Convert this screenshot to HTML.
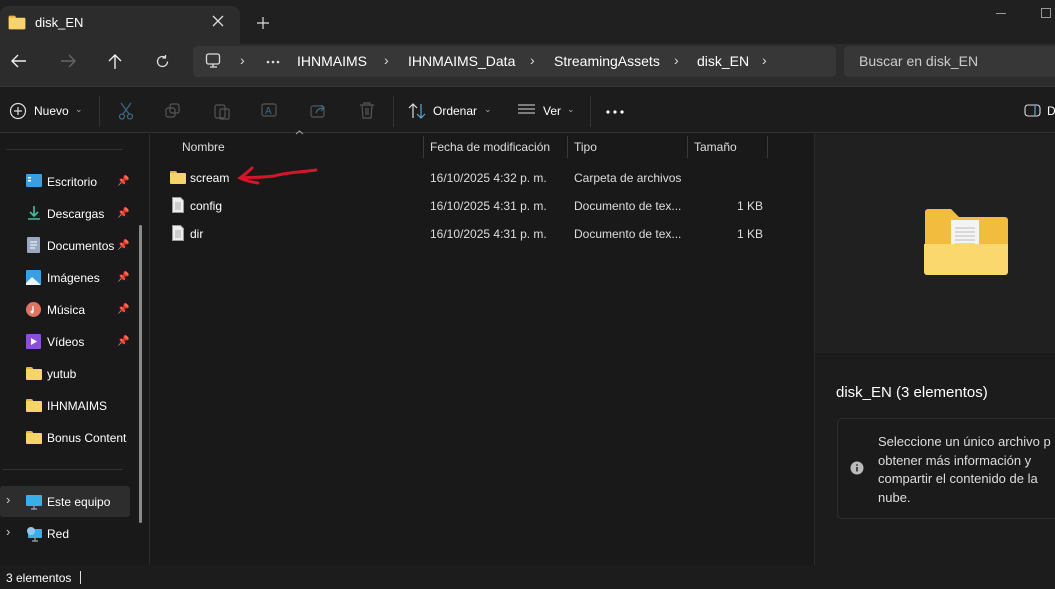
<!DOCTYPE html>
<html><head><meta charset="utf-8"><style>
*{margin:0;padding:0;box-sizing:border-box}
body{width:1055px;height:589px;overflow:hidden;background:#191919;font-family:"Segoe UI","Liberation Sans",sans-serif;color:#fff;position:relative;font-size:12px}
.a{position:absolute;white-space:nowrap}
.t{font-size:12px;color:#fff;margin-top:1px}
.g{color:#ddd;margin-top:1px}
svg{position:absolute}
.fold{position:absolute;width:16px;height:13px}
.fold:before{content:"";position:absolute;left:0;top:0;width:7px;height:4px;background:#e8b43a;border-radius:1px 2px 0 0}
.fold:after{content:"";position:absolute;left:0;top:2px;width:16px;height:11px;background:#f7d36c;border-radius:1px}
.pin{color:#999;font-size:10px}
</style></head><body>
<div class="a" style="left:0;top:0;width:1055px;height:44px;background:#202020"></div>
<div class="a" style="left:0;top:6px;width:240px;height:38px;background:#2c2c2c;border-radius:8px 8px 0 0"></div>
<div class="fold" style="left:9px;top:16px;transform:scale(1.05)"></div>
<div class="a" style="left:35px;top:15px;font-size:13px">disk_EN</div>
<svg style="left:212px;top:15px" width="12" height="12"><path d="M1 1l10 10M11 1L1 11" stroke="#ddd" stroke-width="1.3"/></svg>
<svg style="left:257px;top:17px" width="12" height="12"><path d="M6 0v12M0 6h12" stroke="#ddd" stroke-width="1.2"/></svg>
<div class="a" style="left:996px;top:13px;width:10px;height:1px;background:#999"></div>
<div class="a" style="left:1041px;top:8px;width:10px;height:10px;border:1px solid #999"></div>
<div class="a" style="left:0;top:44px;width:1055px;height:43px;background:#2c2c2c;border-bottom:1px solid #3a3a3a"></div>
<svg style="left:11px;top:54px" width="16" height="14"><path d="M15 7H2M7 1L1 7l6 6" fill="none" stroke="#eee" stroke-width="1.4"/></svg>
<svg style="left:60px;top:54px" width="16" height="14"><path d="M1 7h13M9 1l6 6-6 6" fill="none" stroke="#666" stroke-width="1.4"/></svg>
<svg style="left:108px;top:54px" width="14" height="16"><path d="M7 15V2M1 7l6-6 6 6" fill="none" stroke="#eee" stroke-width="1.4"/></svg>
<svg style="left:155px;top:54px" width="15" height="15" viewBox="0 0 15 15"><path d="M12.5 7.5A5 5 0 1 1 10.5 3.5M10.5 1v3h-3" fill="none" stroke="#ddd" stroke-width="1.3"/></svg>
<div class="a" style="left:193px;top:46px;width:643px;height:31px;background:#373737;border-radius:5px"></div>
<svg style="left:205px;top:53px" width="17" height="16" viewBox="0 0 17 16"><rect x="1.5" y="1" width="13" height="10" rx="2" fill="none" stroke="#ddd" stroke-width="1.3"/><path d="M5 14h7M8 11v3" stroke="#ddd" stroke-width="1.3"/></svg>
<div class="a" style="left:240px;top:52px;font-size:14px;color:#ddd">›</div>
<svg style="left:266px;top:60px" width="14" height="4"><circle cx="2" cy="2" r="1.3" fill="#ddd"/><circle cx="7" cy="2" r="1.3" fill="#ddd"/><circle cx="12" cy="2" r="1.3" fill="#ddd"/></svg>
<div class="a" style="left:297px;top:53px;font-size:14px">IHNMAIMS</div>
<div class="a" style="left:384px;top:52px;font-size:14px;color:#ddd">›</div>
<div class="a" style="left:408px;top:53px;font-size:14px">IHNMAIMS_Data</div>
<div class="a" style="left:530px;top:52px;font-size:14px;color:#ddd">›</div>
<div class="a" style="left:554px;top:53px;font-size:14px">StreamingAssets</div>
<div class="a" style="left:674px;top:52px;font-size:14px;color:#ddd">›</div>
<div class="a" style="left:697px;top:53px;font-size:14px">disk_EN</div>
<div class="a" style="left:762px;top:52px;font-size:14px;color:#ddd">›</div>
<div class="a" style="left:844px;top:46px;width:215px;height:31px;background:#373737;border-radius:5px"></div>
<div class="a" style="left:859px;top:53px;font-size:14px;color:#ccc">Buscar en disk_EN</div>
<div class="a" style="left:0;top:88px;width:1055px;height:45px;background:#1c1c1c;border-bottom:1px solid #333"></div>
<svg style="left:9px;top:102px" width="18" height="18" viewBox="0 0 18 18"><circle cx="9" cy="9" r="7.5" fill="none" stroke="#ddd" stroke-width="1.2"/><path d="M9 5v8M5 9h8" stroke="#ddd" stroke-width="1.2"/></svg>
<div class="a" style="left:34px;top:104px;font-size:12px">Nuevo</div>
<div class="a" style="left:75px;top:104px;font-size:9px;color:#aaa">⌄</div>
<div class="a" style="left:99px;top:96px;width:1px;height:31px;background:#333"></div>
<svg style="left:118px;top:102px" width="16" height="18"><path d="M3 1l8 11M13 1L5 12" stroke="#3e6a80" stroke-width="1.2"/><circle cx="4" cy="14.5" r="2.5" fill="none" stroke="#3e6a80" stroke-width="1.2"/><circle cx="12" cy="14.5" r="2.5" fill="none" stroke="#3e6a80" stroke-width="1.2"/></svg>
<svg style="left:165px;top:103px" width="16" height="16"><rect x="1" y="5" width="9" height="9" rx="2" fill="none" stroke="#555" stroke-width="1.2"/><rect x="5" y="1" width="9" height="9" rx="2" fill="none" stroke="#555" stroke-width="1.2"/></svg>
<svg style="left:214px;top:102px" width="16" height="18"><rect x="1" y="3" width="10" height="13" rx="2" fill="none" stroke="#555" stroke-width="1.2"/><rect x="6" y="7" width="9" height="10" rx="1" fill="none" stroke="#555" stroke-width="1.2"/></svg>
<svg style="left:261px;top:102px" width="18" height="17"><rect x="1" y="2" width="14" height="12" rx="2" fill="none" stroke="#555" stroke-width="1.2"/><text x="4" y="12" font-size="10" fill="#3e6a80" font-family="Liberation Sans">A</text></svg>
<svg style="left:310px;top:102px" width="17" height="17"><rect x="1" y="4" width="13" height="11" rx="2" fill="none" stroke="#555" stroke-width="1.2"/><path d="M6 11c1-4 4-5 8-5M11 3l3 3-3 3" fill="none" stroke="#3e6a80" stroke-width="1.2"/></svg>
<svg style="left:359px;top:102px" width="16" height="17"><path d="M1 3h14M5 3V1h6v2M3 3l1 13h8l1-13M7 6v7M9 6v7" fill="none" stroke="#555" stroke-width="1.2"/></svg>
<div class="a" style="left:393px;top:96px;width:1px;height:31px;background:#333"></div>
<svg style="left:408px;top:103px" width="18" height="16"><path d="M5 15V1M1 5l4-4 4 4" fill="none" stroke="#ddd" stroke-width="1.2"/><path d="M13 1v14M9 11l4 4 4-4" fill="none" stroke="#5aa7d6" stroke-width="1.2"/></svg>
<div class="a" style="left:433px;top:104px;font-size:12px">Ordenar</div>
<div class="a" style="left:484px;top:104px;font-size:9px;color:#aaa">⌄</div>
<svg style="left:518px;top:104px" width="18" height="12"><path d="M0 1h17M0 5h17M0 9h17" stroke="#ddd" stroke-width="1.1"/></svg>
<div class="a" style="left:543px;top:104px;font-size:12px">Ver</div>
<div class="a" style="left:567px;top:104px;font-size:9px;color:#aaa">⌄</div>
<div class="a" style="left:590px;top:96px;width:1px;height:31px;background:#333"></div>
<svg style="left:606px;top:110px" width="18" height="4"><circle cx="2" cy="2" r="1.6" fill="#fff"/><circle cx="9" cy="2" r="1.6" fill="#fff"/><circle cx="16" cy="2" r="1.6" fill="#fff"/></svg>
<svg style="left:1024px;top:104px" width="17" height="14"><rect x="1" y="1" width="15" height="11" rx="3" fill="none" stroke="#ddd" stroke-width="1.1"/><path d="M11 1v11" stroke="#5aa7d6" stroke-width="1.2"/></svg>
<div class="a" style="left:1047px;top:104px;font-size:12px">D</div>
<div class="a" style="left:6px;top:149px;width:117px;height:1px;background:#333"></div>
<div class="a" style="left:149px;top:134px;width:1px;height:431px;background:#2b2b2b"></div>
<div class="a" style="left:139px;top:225px;width:3px;height:298px;background:#8a8a8a;border-radius:2px"></div>
<svg style="left:26px;top:174px" width="16" height="14"><rect width="16" height="13" rx="1" fill="#3a9fe0"/><rect x="2" y="3" width="3" height="1.5" fill="#fff"/><rect x="2" y="6" width="3" height="1.5" fill="#fff"/></svg>
<div class="a t" style="left:47px;top:174px">Escritorio</div><div class="a pin" style="left:117px;top:176px">📌</div>
<svg style="left:27px;top:205px" width="14" height="16"><path d="M7 1v10M3 7l4 4 4-4M1 14h12" fill="none" stroke="#3cc39a" stroke-width="1.6"/></svg>
<div class="a t" style="left:47px;top:206px">Descargas</div><div class="a pin" style="left:117px;top:208px">📌</div>
<svg style="left:27px;top:237px" width="13" height="16"><rect width="13" height="16" rx="1" fill="#9aa7c0"/><path d="M3 5h7M3 8h7M3 11h5" stroke="#fff" stroke-width="1"/></svg>
<div class="a t" style="left:47px;top:238px">Documentos</div><div class="a pin" style="left:117px;top:240px">📌</div>
<svg style="left:26px;top:270px" width="15" height="15"><rect width="15" height="15" rx="1" fill="#3a9fe0"/><path d="M0 13l6-6 9 8H0z" fill="#eaf4ff"/></svg>
<div class="a t" style="left:47px;top:270px">Imágenes</div><div class="a pin" style="left:117px;top:272px">📌</div>
<svg style="left:26px;top:302px" width="15" height="15"><circle cx="7.5" cy="7.5" r="7.5" fill="#e0735f"/><path d="M7 4v6" stroke="#fff" stroke-width="1.3"/><circle cx="6" cy="10" r="1.5" fill="#fff"/></svg>
<div class="a t" style="left:47px;top:302px">Música</div><div class="a pin" style="left:117px;top:304px">📌</div>
<svg style="left:26px;top:334px" width="15" height="15"><rect width="15" height="15" rx="1" fill="#8c4fd8"/><path d="M5 4l6 3.5L5 11z" fill="#fff"/></svg>
<div class="a t" style="left:47px;top:334px">Vídeos</div><div class="a pin" style="left:117px;top:336px">📌</div>
<div class="fold" style="left:26px;top:367px"></div><div class="a t" style="left:47px;top:366px">yutub</div>
<div class="fold" style="left:26px;top:399px"></div><div class="a t" style="left:47px;top:398px">IHNMAIMS</div>
<div class="fold" style="left:26px;top:431px"></div><div class="a t" style="left:47px;top:430px">Bonus Content</div>
<div class="a" style="left:3px;top:469px;width:120px;height:1px;background:#333"></div>
<div class="a" style="left:0;top:486px;width:130px;height:31px;background:#2d2d2d;border-radius:3px"></div>
<div class="a" style="left:6px;top:492px;font-size:13px;color:#ccc">›</div>
<svg style="left:26px;top:495px" width="16" height="15"><rect width="16" height="11" rx="1" fill="#3aaee6"/><path d="M8 11v3M5 14h6" stroke="#9ab" stroke-width="1.2"/></svg>
<div class="a t" style="left:47px;top:494px">Este equipo</div>
<div class="a" style="left:6px;top:524px;font-size:13px;color:#ccc">›</div>
<svg style="left:26px;top:526px" width="16" height="16"><rect x="2" y="3" width="14" height="9" rx="1" fill="#3aaee6"/><circle cx="5" cy="5" r="4" fill="#8fc9ee"/><path d="M9 12v3M6 15h6" stroke="#9ab" stroke-width="1.2"/></svg>
<div class="a t" style="left:47px;top:526px">Red</div>
<svg style="left:295px;top:130px" width="9" height="5"><path d="M1 4l3.5-3 3.5 3" fill="none" stroke="#aaa"/></svg>
<div class="a g" style="left:182px;top:139px">Nombre</div>
<div class="a" style="left:423px;top:136px;width:1px;height:22px;background:#3a3a3a"></div>
<div class="a g" style="left:430px;top:139px">Fecha de modificación</div>
<div class="a" style="left:567px;top:136px;width:1px;height:22px;background:#3a3a3a"></div>
<div class="a g" style="left:574px;top:139px">Tipo</div>
<div class="a" style="left:687px;top:136px;width:1px;height:22px;background:#3a3a3a"></div>
<div class="a g" style="left:694px;top:139px">Tamaño</div>
<div class="a" style="left:767px;top:136px;width:1px;height:22px;background:#3a3a3a"></div>
<div class="fold" style="left:170px;top:171px"></div><div class="a t" style="left:190px;top:170px">scream</div>
<div class="a g" style="left:430px;top:170px">16/10/2025 4:32 p. m.</div>
<div class="a g" style="left:574px;top:170px">Carpeta de archivos</div>
<svg style="left:172px;top:197px" width="12" height="16"><path d="M.5.5h8l3 3v12H.5z" fill="#eee" stroke="#999"/><path d="M3 6h6M3 8h6M3 10h6M3 12h6" stroke="#999" stroke-width=".8"/></svg>
<div class="a t" style="left:190px;top:198px">config</div>
<div class="a g" style="left:430px;top:198px">16/10/2025 4:31 p. m.</div>
<div class="a g" style="left:574px;top:198px">Documento de tex...</div>
<div class="a g" style="left:737px;top:198px">1 KB</div>
<svg style="left:172px;top:225px" width="12" height="16"><path d="M.5.5h8l3 3v12H.5z" fill="#eee" stroke="#999"/><path d="M3 6h6M3 8h6M3 10h6M3 12h6" stroke="#999" stroke-width=".8"/></svg>
<div class="a t" style="left:190px;top:226px">dir</div>
<div class="a g" style="left:430px;top:226px">16/10/2025 4:31 p. m.</div>
<div class="a g" style="left:574px;top:226px">Documento de tex...</div>
<div class="a g" style="left:737px;top:226px">1 KB</div>
<svg style="left:234px;top:164px" width="86" height="22"><path d="M82 6C70 8 55 8 40 12 25 14 15 13 8 14M18 4C14 8 10 11 6 14 12 17 18 18 24 19" fill="none" stroke="#d4162a" stroke-width="3" stroke-linecap="round"/></svg>
<div class="a" style="left:814px;top:134px;width:241px;height:431px;background:#1c1c1c;border-left:1px solid #2b2b2b"></div>
<div class="a" style="left:815px;top:134px;width:240px;height:219px;background:#202020"></div>
<svg style="left:923px;top:208px" width="86" height="68"><path d="M2 4a3 3 0 0 1 3-3h23l8 8h46a3 3 0 0 1 3 3v50H2z" fill="#f2bd3e"/><rect x="28" y="12" width="28" height="36" fill="#f4f4f4"/><path d="M32 20h20M32 24h20M32 28h20M32 32h20M32 36h20" stroke="#bbb"/><path d="M1 36h84v28a3 3 0 0 1-3 3H4a3 3 0 0 1-3-3z" fill="#fbd86e"/></svg>
<div class="a" style="left:836px;top:384px;font-size:15px">disk_EN (3 elementos)</div>
<div class="a" style="left:837px;top:418px;width:230px;height:101px;border:1px solid #2e2e2e;border-radius:5px;background:#1b1b1b"></div>
<svg style="left:850px;top:461px" width="14" height="14"><circle cx="7" cy="7" r="6.5" fill="#bbb"/><path d="M7 6v4.5" stroke="#222" stroke-width="1.5"/><circle cx="7" cy="4" r=".9" fill="#222"/></svg>
<div class="a" style="left:878px;top:433px;font-size:13px;line-height:18.5px;color:#ddd">Seleccione un único archivo p<br>obtener más información y<br>compartir el contenido de la<br>nube.</div>
<div class="a" style="left:0;top:565px;width:1055px;height:24px;background:#1c1c1c"></div>
<div class="a t" style="left:6px;top:570px">3 elementos</div>
<div class="a" style="left:80px;top:571px;width:1px;height:13px;background:#ddd"></div>
</body></html>
